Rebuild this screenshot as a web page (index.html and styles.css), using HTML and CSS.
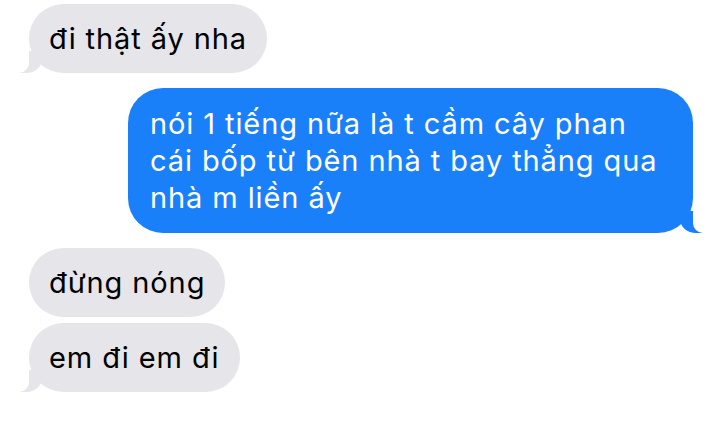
FILE: index.html
```html
<!DOCTYPE html>
<html lang="vi">

<head>
    <meta charset="UTF-8">
    <meta name="viewport" content="width=device-width, initial-scale=1.0">
    <title>Messages</title>
    <link rel="stylesheet" href="styles.css">
</head>

<body>
    <div class="thread">
        <div class="msg in tail">đi thật ấy nha</div>
        <div class="msg out tail">nói 1 tiếng nữa là t cầm cây phan<br>cái bốp từ bên nhà t bay thẳng qua<br>nhà m liền ấy</div>
        <div class="group">
            <div class="msg in">đừng nóng</div>
            <div class="msg in tail">em đi em đi</div>
        </div>
    </div>
</body>

</html>
```

FILE: styles.css
```css
body {
    margin: 0;
    background: #ffffff;
    font-family: Inter, "Open Sans", sans-serif;
}

.thread {
    display: flex;
    flex-direction: column;
    gap: 15px;
    padding: 4px 27px 0 29px;
}

.group {
    display: flex;
    flex-direction: column;
    gap: 6px;
}

.msg {
    position: relative;
    font-size: 29px;
    line-height: 37px;
    letter-spacing: 0.9px;
    padding: 16px 20px;
    border-radius: 35px;
}

.in {
    align-self: flex-start;
    background: #e5e5ea;
    color: #000000;
}

.out {
    align-self: flex-end;
    background: #1a80fa;
    color: #ffffff;
    width: 565px;
    box-sizing: border-box;
    padding: 17px 20px 17px 22px;
}

/* bubble tails */
.in.tail::before,
.out.tail::before {
    content: '';
    position: absolute;
    bottom: 0;
    height: 22px;
    width: 22px;
}

.in.tail::after,
.out.tail::after {
    content: '';
    position: absolute;
    bottom: 0;
    height: 22px;
    width: 12px;
    background: #ffffff;
}

.in.tail::before {
    left: -9px;
    background: #e5e5ea;
    border-bottom-right-radius: 16px 14px;
}

.in.tail::after {
    left: -12px;
    border-bottom-right-radius: 10px;
}

.out.tail::before {
    right: -9px;
    background: #1a80fa;
    border-bottom-left-radius: 16px 14px;
}

.out.tail::after {
    right: -12px;
    border-bottom-left-radius: 10px;
}
```
